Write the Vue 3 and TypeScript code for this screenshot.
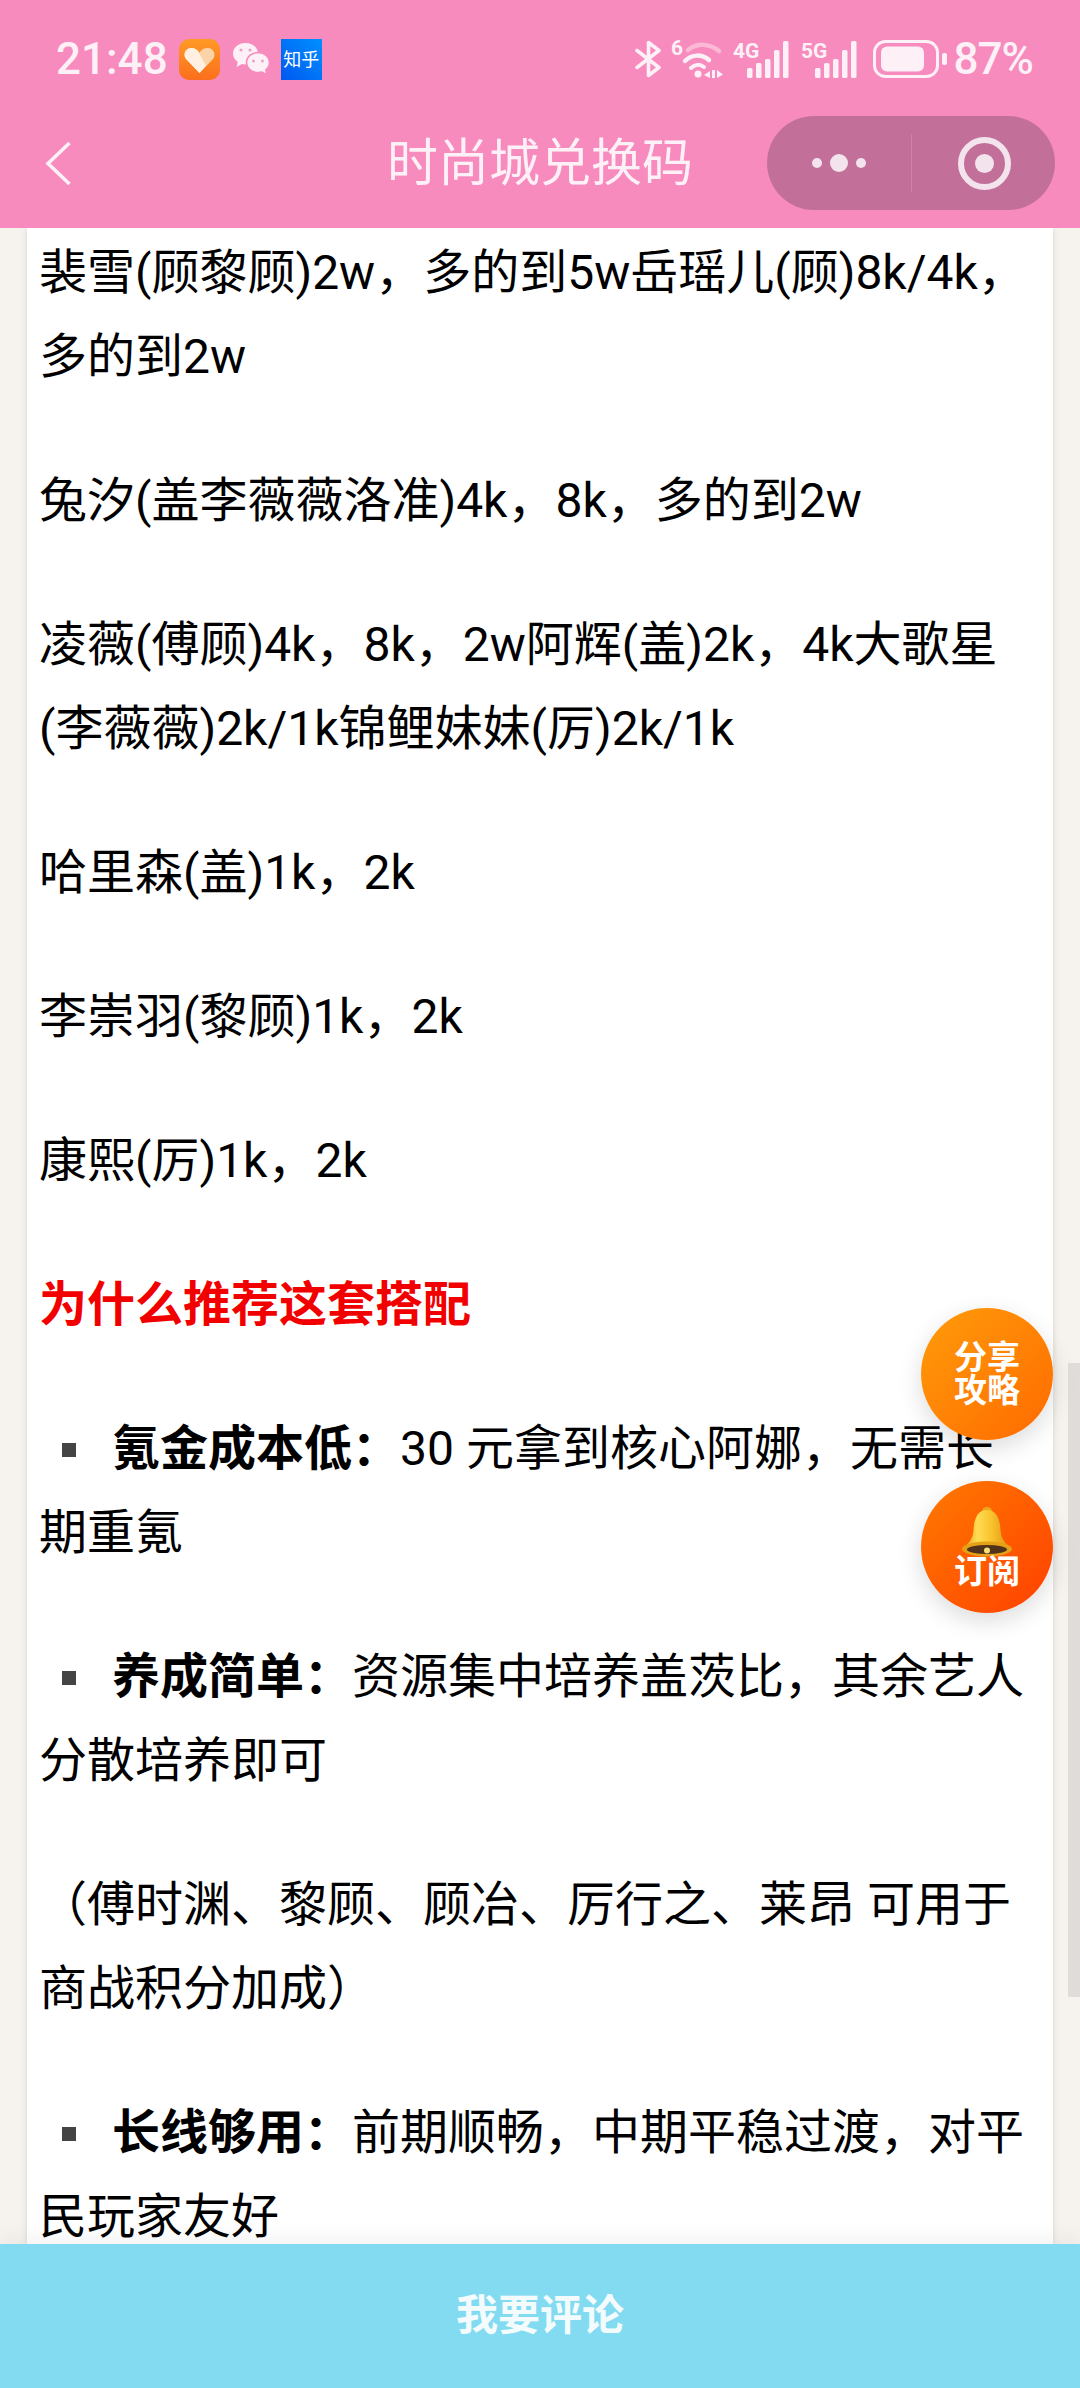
<script setup lang="ts">
interface Block {
  bold?: string;
  text: string;
  heading?: boolean;
}

const blocks: Block[] = [
  { text: "裴雪(顾黎顾)2w，多的到5w岳瑶儿(顾)8k/4k，多的到2w" },
  { text: "兔汐(盖李薇薇洛准)4k，8k，多的到2w" },
  { text: "凌薇(傅顾)4k，8k，2w阿辉(盖)2k，4k大歌星(李薇薇)2k/1k锦鲤妹妹(厉)2k/1k" },
  { text: "哈里森(盖)1k，2k" },
  { text: "李崇羽(黎顾)1k，2k" },
  { text: "康熙(厉)1k，2k" },
  { text: "为什么推荐这套搭配", heading: true },
  { bold: "氪金成本低：", text: "30 元拿到核心阿娜，无需长期重氪" },
  { bold: "养成简单：", text: "资源集中培养盖茨比，其余艺人分散培养即可" },
  { text: "（傅时渊、黎顾、顾冶、厉行之、莱昂 可用于商战积分加成）" },
  { bold: "长线够用：", text: "前期顺畅，中期平稳过渡，对平民玩家友好" },
];

const bars = [
  { x: 14, h: 10 },
  { x: 23, h: 15 },
  { x: 32, h: 19 },
  { x: 41, h: 28 },
  { x: 50, h: 37 },
];
</script>

<template>
  <div class="page">
    <header class="top">
      <div class="status">
        <div class="status-left">
          <span class="time">21:48</span>
          <svg class="app-icon" viewBox="0 0 41 41" width="41" height="41">
            <defs>
              <linearGradient id="orangeApp" x1="0" y1="0" x2="0" y2="1">
                <stop offset="0" stop-color="#ff9a26" />
                <stop offset="1" stop-color="#fb6f1c" />
              </linearGradient>
            </defs>
            <rect width="41" height="41" rx="10" fill="url(#orangeApp)" />
            <path d="M20.5 34 L7 20 C3.5 15.5 6.5 9 12.5 9 C16 9 18.8 11 20.5 13.5 C22.2 11 25 9 28.5 9 C34.5 9 37.5 15.5 34 20 Z" fill="#fbd3a8" />
            <path d="M20.5 34 L7 20 C3.5 15.5 6.5 9 12.5 9 C15 9 17 10 18.5 11.5 L27 26.5 Z" fill="#fff0e2" />
          </svg>
          <svg class="wechat" viewBox="0 0 38 34" width="38" height="34">
            <path d="M13.5 1 C6.5 1 1 5.5 1 11.5 C1 15 2.8 18 5.8 20 L4.5 25 L10 22 C11 22.2 12.3 22.4 13.5 22.4 C20.5 22.4 26 17.5 26 11.5 C26 5.5 20.5 1 13.5 1 Z" fill="#fdf0f6" />
            <path d="M26 10.5 C32.5 10.5 37.5 15 37.5 20.5 C37.5 23.5 36 26 33.8 28 L35 33 L30 30 C28.8 30.3 27.5 30.5 26 30.5 C19.5 30.5 14.5 26 14.5 20.5 C14.5 15 19.5 10.5 26 10.5 Z" fill="#fdf0f6" stroke="#f78bbd" stroke-width="1.5" />
            <circle cx="9" cy="8" r="1.6" fill="#eaa5c6" />
            <circle cx="18" cy="8" r="1.6" fill="#eaa5c6" />
            <circle cx="21.5" cy="19" r="1.5" fill="#eaa5c6" />
            <circle cx="30.5" cy="19" r="1.5" fill="#eaa5c6" />
          </svg>
          <span class="zhihu">知乎</span>
        </div>
        <div class="status-right">
          <svg class="bt" viewBox="0 0 27 38" width="27" height="38">
            <path d="M2 10.5 L24 27.5 L13.5 35.5 L13.5 2.5 L24 10.5 L2 27.5" fill="none" stroke="#fdf0f6" stroke-width="3.6" stroke-linejoin="round" stroke-linecap="round" />
          </svg>
          <svg class="wifi" viewBox="0 -2 52 44" width="52" height="44">
            <text x="0" y="16" class="tiny">6</text>
            <path d="M17 11 C26 4 38 4 48 12" fill="none" stroke="#fbb9d6" stroke-width="4.5" stroke-linecap="round" />
            <path d="M14 22 C21 15 31 15 38 21" fill="none" stroke="#fdf0f6" stroke-width="4.5" stroke-linecap="round" />
            <path d="M20 29 C24 25 29 25 33 28" fill="none" stroke="#fdf0f6" stroke-width="4" stroke-linecap="round" />
            <circle cx="27" cy="35" r="3.5" fill="#fdf0f6" />
            <path d="M39 32 L33 36 L39 39 Z M41 31 H44 V39 H41 Z M46 31 L52 35.5 L46 39 Z" fill="#fdf0f6" />
          </svg>
          <svg v-for="g in ['4G', '5G']" :key="g" class="signal" viewBox="0 -2 57 44" width="57" height="44">
            <text x="0" y="19" class="tiny">{{ g }}</text>
            <rect
              v-for="b in bars"
              :key="b.x"
              :x="b.x"
              :y="39 - b.h"
              width="5.5"
              :height="b.h"
              rx="1.5"
              fill="#fdf0f6"
            />
          </svg>
          <svg class="battery" viewBox="0 0 75 38" width="75" height="38">
            <rect x="1.5" y="1.5" width="63" height="35" rx="11" fill="none" stroke="#fdf0f6" stroke-width="3" />
            <rect x="8" y="6.5" width="43" height="25" rx="6" fill="#fdf0f6" />
            <rect x="69" y="13" width="5" height="12" rx="2" fill="#fdf0f6" />
          </svg>
          <span class="percent">87%</span>
        </div>
      </div>
      <nav class="nav">
        <svg class="back" viewBox="0 0 27 45" width="27" height="45">
          <path d="M24.5 2 L3 22.5 L24.5 43" fill="none" stroke="#fdf0f6" stroke-width="3.6" />
        </svg>
        <h1 class="title">时尚城兑换码</h1>
        <div class="capsule">
          <div class="capsule-dots">
            <i class="dot-s" />
            <i class="dot-l" />
            <i class="dot-s" />
          </div>
          <div class="capsule-sep" />
          <div class="capsule-target">
            <i class="target-dot" />
          </div>
        </div>
      </nav>
    </header>

    <main class="body">
      <article class="card">
        <p
          v-for="(b, i) in blocks"
          :key="i"
          :class="{ heading: b.heading }"
        ><i v-if="b.bold" class="square" /><strong v-if="b.bold">{{ b.bold }}</strong>{{ b.text }}</p>
      </article>
      <div class="scrollbar" />
      <button class="float share">分享<br />攻略</button>
      <button class="float subscribe">
        <svg class="bell" viewBox="0 0 50 50" width="50" height="50">
          <defs>
            <linearGradient id="bellGold" x1="0" y1="0" x2="1" y2="0">
              <stop offset="0" stop-color="#e09a12" />
              <stop offset="0.3" stop-color="#ffdc52" />
              <stop offset="0.6" stop-color="#f9c22c" />
              <stop offset="1" stop-color="#d98f10" />
            </linearGradient>
          </defs>
          <ellipse cx="25" cy="4.5" rx="5" ry="4.5" fill="#e8a81c" />
          <path d="M25 3 C15 3 12 13 11.5 23 C11 32 7 36 1 41 H49 C43 36 39 32 38.5 23 C38 13 35 3 25 3 Z" fill="url(#bellGold)" />
          <ellipse cx="25" cy="42" rx="25" ry="7.5" fill="#e5a216" />
          <ellipse cx="25" cy="42.5" rx="20" ry="4.5" fill="#51321a" />
          <circle cx="25" cy="43.5" r="3" fill="#f7df72" />
        </svg>
        <span>订阅</span>
      </button>
    </main>

    <footer class="comment">我要评论</footer>
  </div>
</template>

<style scoped>
.page {
  width: 1080px;
  height: 2388px;
  display: flex;
  flex-direction: column;
  overflow: hidden;
  font-family: Roboto, "Noto Sans CJK SC", sans-serif;
  background: #f6f3ef;
}

.top {
  height: 228px;
  flex: none;
  background: #f78bbd;
  color: #fdf0f6;
}

.status {
  height: 116px;
  padding: 38px 47px 0 56px;
  box-sizing: border-box;
  display: flex;
  justify-content: space-between;
  align-items: flex-start;
}

.status-left,
.status-right {
  display: flex;
  align-items: center;
  height: 42px;
}

.time {
  font-size: 44px;
  font-weight: 500;
  line-height: 44px;
  margin-right: 11px;
}

.wechat {
  margin-left: 12px;
}

.zhihu {
  width: 41px;
  height: 41px;
  margin-left: 11px;
  background: linear-gradient(45deg, #0058f0, #0090ff);
  color: #fff;
  font-size: 18px;
  line-height: 41px;
  text-align: center;
  white-space: nowrap;
}

.tiny {
  font-family: "Roboto", sans-serif;
  font-size: 21px;
  font-weight: 700;
  fill: #fdf0f6;
}

.bt {
  margin-right: 9px;
}

.wifi {
  margin-right: 10px;
}

.signal {
  margin-right: 11px;
}

.battery {
  margin-left: 4px;
}

.percent {
  margin-left: 6px;
  font-size: 44px;
  font-weight: 500;
  line-height: 44px;
  letter-spacing: -1px;
}

.nav {
  height: 112px;
  padding: 0 25px 0 45px;
  display: flex;
  align-items: center;
  justify-content: space-between;
  position: relative;
}

.back {
  margin-top: -18px;
}

.title {
  margin: -16px 0 0;
  position: absolute;
  left: 0;
  right: 0;
  text-align: center;
  font-size: 51px;
  font-weight: 400;
  line-height: 70px;
}

.capsule {
  width: 288px;
  height: 94px;
  margin-top: -18px;
  border-radius: 47px;
  background: #c2709a;
  display: flex;
  align-items: center;
  position: relative;
}

.capsule-dots {
  width: 144px;
  display: flex;
  justify-content: center;
  align-items: center;
  gap: 8px;
}

.dot-s {
  width: 10px;
  height: 10px;
  border-radius: 50%;
  background: #f3e3ec;
}

.dot-l {
  width: 18px;
  height: 18px;
  border-radius: 50%;
  background: #f3e3ec;
}

.capsule-sep {
  width: 1px;
  height: 58px;
  background: #cf83aa;
}

.capsule-target {
  width: 53px;
  height: 53px;
  margin-left: 46px;
  box-sizing: border-box;
  border: 6px solid #f3e3ec;
  border-radius: 50%;
  display: flex;
  align-items: center;
  justify-content: center;
}

.target-dot {
  width: 19px;
  height: 19px;
  border-radius: 50%;
  background: #f3e3ec;
}

.body {
  flex: 1;
  min-height: 0;
  position: relative;
  overflow: hidden;
}

.card {
  width: 1026px;
  height: 100%;
  margin-left: 27px;
  box-sizing: border-box;
  padding: 3px 12px 0;
  background: #fff;
  box-shadow: 0 0 6px rgba(0, 0, 0, 0.12);
  color: #000;
  font-size: 48px;
  line-height: 84px;
}

.card p {
  margin: 0 0 60px;
}

.card .heading {
  color: #f20000;
  font-weight: 700;
}

.square {
  display: inline-block;
  width: 14px;
  height: 14px;
  margin: 0 36px 5px 23px;
  background: #444;
  vertical-align: middle;
}

.card strong {
  font-weight: 700;
}

.scrollbar {
  position: absolute;
  right: 0;
  top: 1135px;
  width: 12px;
  height: 634px;
  background: #e0dcd9;
}

.float {
  position: absolute;
  left: 921px;
  width: 132px;
  height: 132px;
  padding: 0;
  border: none;
  border-radius: 50%;
  color: #fff;
  font-family: inherit;
  font-size: 33px;
  font-weight: 700;
  line-height: 33px;
  box-shadow: 0 8px 24px rgba(0, 0, 0, 0.14);
  display: flex;
  flex-direction: column;
  align-items: center;
  justify-content: center;
}

.share {
  top: 1080px;
  display: block;
  background: linear-gradient(135deg, #ff9c0a, #ff6a00);
}

.subscribe {
  top: 1253px;
  background: linear-gradient(135deg, #ff7a00, #ff4000);
}

.bell {
  margin-bottom: -2px;
}

.comment {
  height: 144px;
  flex: none;
  background: #82dbf1;
  color: #f4fbfd;
  font-size: 42px;
  font-weight: 700;
  line-height: 144px;
  text-align: center;
  position: relative;
  box-shadow: 0 -6px 20px rgba(0, 0, 0, 0.05);
}
</style>
